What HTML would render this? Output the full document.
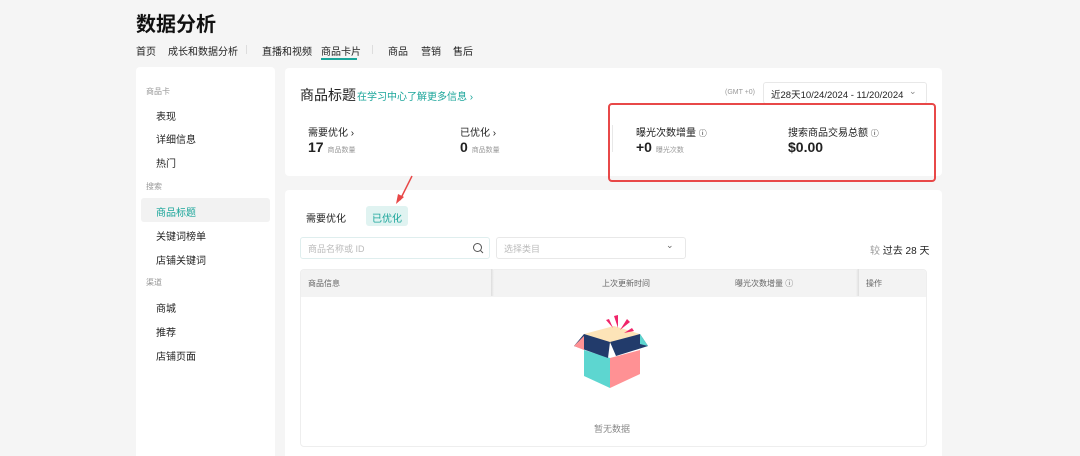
<!DOCTYPE html>
<html><head><meta charset="utf-8"><style>
*{margin:0;padding:0;box-sizing:border-box}
html,body{width:1080px;height:456px;overflow:hidden}
body{background:#f5f5f5;font-family:"Liberation Sans","Noto Sans CJK SC",sans-serif;color:#222;position:relative}
.a{position:absolute;white-space:nowrap}
.card{position:absolute;background:#fff;border-radius:4px}
.t10{font-size:10px}
.g{color:#999}
</style></head><body>
<div class="a" style="left:136px;top:8px;font-size:20px;font-weight:bold;color:#111">数据分析</div>
<div class="a t10" style="left:136px;top:43px">首页</div>
<div class="a t10" style="left:168px;top:43px">成长和数据分析</div>
<div class="a" style="left:246px;top:45px;width:1px;height:9px;background:#ddd"></div>
<div class="a t10" style="left:262px;top:43px">直播和视频</div>
<div class="a t10" style="left:321px;top:43px">商品卡片</div>
<div class="a" style="left:321px;top:58px;width:36px;height:2px;background:#1aa59a"></div>
<div class="a" style="left:372px;top:45px;width:1px;height:9px;background:#ddd"></div>
<div class="a t10" style="left:388px;top:43px">商品</div>
<div class="a t10" style="left:421px;top:43px">营销</div>
<div class="a t10" style="left:453px;top:43px">售后</div>

<div class="card" style="left:136px;top:67px;width:139px;height:400px"></div>
<div class="a g" style="left:146px;top:86px;font-size:8px">商品卡</div>
<div class="a t10" style="left:156px;top:108px">表现</div>
<div class="a t10" style="left:156px;top:131px">详细信息</div>
<div class="a t10" style="left:156px;top:155px">热门</div>
<div class="a g" style="left:146px;top:181px;font-size:8px">搜索</div>
<div class="a" style="left:141px;top:198px;width:129px;height:24px;background:#f2f2f2;border-radius:3px"></div>
<div class="a t10" style="left:156px;top:204px;color:#1aa59a">商品标题</div>
<div class="a t10" style="left:156px;top:228px">关键词榜单</div>
<div class="a t10" style="left:156px;top:252px">店铺关键词</div>
<div class="a g" style="left:146px;top:277px;font-size:8px">渠道</div>
<div class="a t10" style="left:156px;top:300px">商城</div>
<div class="a t10" style="left:156px;top:324px">推荐</div>
<div class="a t10" style="left:156px;top:348px">店铺页面</div>

<div class="card" style="left:285px;top:68px;width:657px;height:108px"></div>
<div class="a" style="left:300px;top:85px;font-size:14px">商品标题</div>
<div class="a t10" style="left:357px;top:88px;color:#1aa59a">在学习中心了解更多信息 ›</div>
<div class="a g" style="left:725px;top:89px;font-size:7px">(GMT +0)</div>
<div class="a" style="left:763px;top:82px;width:164px;height:22px;border:1px solid #e8e8e8;border-radius:3px"></div>
<div class="a" style="left:771px;top:87px;font-size:9.5px">近28天10/24/2024 - 11/20/2024</div>
<div class="a" style="left:909px;top:86px;font-size:9px;color:#888">⌄</div>
<div class="a t10" style="left:308px;top:124px">需要优化 ›</div>
<div class="a" style="left:308px;top:139px;font-size:14px;font-weight:bold">17 <span style="font-size:7px;font-weight:normal;color:#999">商品数量</span></div>
<div class="a t10" style="left:460px;top:124px">已优化 ›</div>
<div class="a" style="left:460px;top:139px;font-size:14px;font-weight:bold">0 <span style="font-size:7px;font-weight:normal;color:#999">商品数量</span></div>
<div class="a" style="left:612px;top:125px;width:1px;height:27px;background:#e8e8e8"></div>
<div class="a t10" style="left:636px;top:124px">曝光次数增量 <span style="font-size:8px">ⓘ</span></div>
<div class="a" style="left:636px;top:139px;font-size:14px;font-weight:bold">+0 <span style="font-size:7px;font-weight:normal;color:#999">曝光次数</span></div>
<div class="a t10" style="left:788px;top:124px">搜索商品交易总额 <span style="font-size:8px">ⓘ</span></div>
<div class="a" style="left:788px;top:139px;font-size:14px;font-weight:bold">$0.00</div>
<div class="a" style="left:608px;top:103px;width:328px;height:79px;border:2.5px solid #e84848;border-radius:4px"></div>

<div class="card" style="left:285px;top:190px;width:657px;height:280px"></div>
<svg class="a" style="left:390px;top:172px" width="28" height="36"><line x1="22" y1="4" x2="10" y2="28" stroke="#e84848" stroke-width="1.5"/><polygon points="6,32 8,22 14,25" fill="#e84848"/></svg>
<div class="a t10" style="left:306px;top:210px">需要优化</div>
<div class="a" style="left:366px;top:206px;width:42px;height:20px;background:#e0f3f1;border-radius:3px"></div>
<div class="a t10" style="left:372px;top:210px;color:#1aa59a">已优化</div>
<div class="a" style="left:300px;top:237px;width:190px;height:22px;border:1px solid #dfeeee;border-radius:3px"></div>
<div class="a" style="left:308px;top:242px;font-size:9px;color:#bbb">商品名称或 ID</div>
<svg class="a" style="left:472px;top:242px" width="12" height="12"><circle cx="5.5" cy="5.5" r="4" fill="none" stroke="#555" stroke-width="1"/><line x1="8.5" y1="8.5" x2="11" y2="11" stroke="#555"/></svg>
<div class="a" style="left:496px;top:237px;width:190px;height:22px;border:1px solid #e8e8e8;border-radius:3px"></div>
<div class="a" style="left:504px;top:242px;font-size:9px;color:#bbb">选择类目</div>
<div class="a" style="left:666px;top:240px;font-size:9px;color:#666">⌄</div>
<div class="a t10" style="left:870px;top:242px"><span style="color:#999">较</span> 过去 28 天</div>
<div class="a" style="left:300px;top:269px;width:627px;height:178px;border:1px solid #eee;border-radius:4px;overflow:hidden">
<div style="height:27px;background:#f3f3f3"></div></div>
<div class="a" style="left:491px;top:269px;width:3px;height:27px;background:linear-gradient(90deg,#ddd,#f3f3f3)"></div>
<div class="a" style="left:856px;top:269px;width:3px;height:27px;background:linear-gradient(90deg,#f3f3f3,#ddd)"></div>
<div class="a" style="left:308px;top:278px;font-size:8px;color:#666">商品信息</div>
<div class="a" style="left:602px;top:278px;font-size:8px;color:#666">上次更新时间</div>
<div class="a" style="left:735px;top:278px;font-size:8px;color:#666">曝光次数增量 ⓘ</div>
<div class="a" style="left:866px;top:278px;font-size:8px;color:#666">操作</div>
<svg class="a" style="left:572px;top:314px" width="84" height="76" viewBox="0 0 84 76">
<polygon points="12,36 38,44 38,74 12,62" fill="#5dd6d0"/>
<polygon points="38,44 68,36 68,60 38,74" fill="#ff9194"/>
<polygon points="12,20 42,12 68,20 38,30" fill="#fde4b8"/>
<polygon points="12,20 38,28 36,44 2,32" fill="#223b6b"/>
<polygon points="38,28 68,20 76,32 44,42" fill="#223b6b"/>
<polygon points="2,32 12,22 12,36" fill="#ff9194"/>
<polygon points="68,20 76,32 68,30" fill="#5dd6d0"/>
<polygon points="42,2 46,1 46,14" fill="#f0256a"/>
<polygon points="34,6 37,5 41,14" fill="#f0256a"/>
<polygon points="55,5 58,8 48,16" fill="#f0256a"/>
<polygon points="60,14 62,17 52,19" fill="#f0256a"/>
</svg>
<div class="a" style="left:594px;top:422px;font-size:9px;color:#888">暂无数据</div>
</body></html>
